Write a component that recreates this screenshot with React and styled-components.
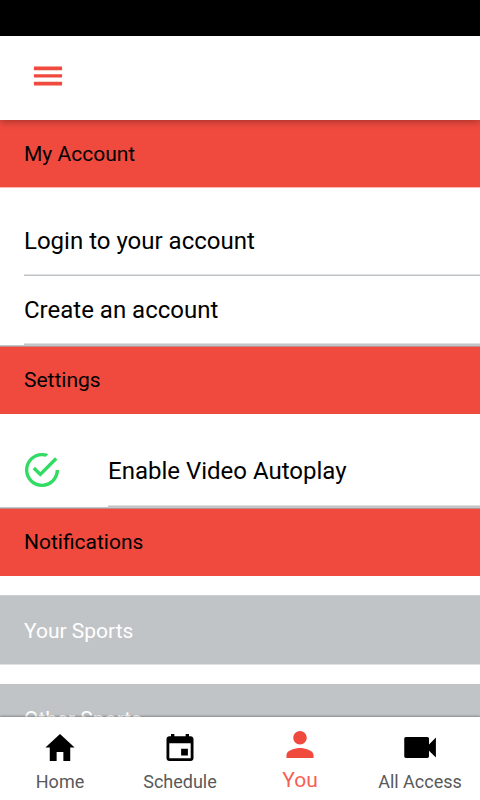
import styled, { createGlobalStyle } from "styled-components";

const GlobalStyle = createGlobalStyle`
  * {
    box-sizing: border-box;
  }
  body {
    margin: 0;
    background: #fff;
    font-family: Roboto, sans-serif;
    color: #000;
  }
`;

const Screen = styled.div`
  display: flex;
  flex-direction: column;
  height: 800px;
  width: 480px;
  overflow: hidden;
`;

const StatusBar = styled.div`
  flex: none;
  height: 36px;
  background: #000;
`;

const Toolbar = styled.header`
  flex: none;
  display: flex;
  align-items: center;
  height: 84px;
  padding: 0 0 4px 30px;
  background: #fff;
  z-index: 1;
  box-shadow: 0 2px 7px rgba(0, 0, 0, 0.3);
`;

const MenuButton = styled.button`
  display: flex;
  padding: 0;
  border: none;
  background: none;
  color: #f04a3f;
`;

const Content = styled.main`
  flex: 1;
  min-height: 0;
  overflow: hidden;
`;

const SectionHeader = styled.h2`
  margin: 0;
  height: 68px;
  padding: 0 24px;
  line-height: ${(props) => (props.$soft ? 69 : 67)}px;
  font-size: 21px;
  font-weight: 400;
  color: #000;
  background: #f04a3f;
  border-top: ${(props) => (props.$ruled ? "1px solid #c08c8a" : "none")};
  border-bottom: ${(props) => (props.$soft ? "1px solid #f9b5b0" : "none")};
`;

const Items = styled.ul`
  margin: 0;
  padding: 19px 0 0;
  list-style: none;
  border-bottom: 1px solid #c5c8ca;
`;

const Item = styled.li`
  display: flex;
  align-items: center;
  height: ${(props) => props.$height}px;
  padding-left: 24px;
`;

const ItemLabel = styled.div`
  flex: 1;
  height: 100%;
  line-height: ${(props) => props.$line}px;
  font-size: 24px;
  border-bottom: 1px solid #c1c4c7;
  box-shadow: inset 0 -1px #dfe0e1;
`;

const IconSlot = styled.div`
  display: flex;
  width: 84px;
  margin-left: -3px;
  margin-right: 3px;
  padding-bottom: 1px;
  color: #32db64;
`;

const SportGroup = styled.div`
  height: 70px;
  margin-top: 19px;
  padding-left: 24px;
  line-height: ${(props) => (props.$ruled ? 70 : 69)}px;
  font-size: 21px;
  color: #fff;
  background: #c1c4c7;
  border-top: 1px solid ${(props) => (props.$ruled ? "#cccfd1" : "#c1c4c7")};
  border-bottom: 1px solid #e0e1e3;
`;

const Tabs = styled.nav`
  flex: none;
  display: flex;
  height: 83px;
  background: #fff;
  z-index: 1;
  box-shadow: 0 -1px 2px rgba(0, 0, 0, 0.3);
`;

const Tab = styled.a`
  flex: 1;
  display: flex;
  flex-direction: column;
  align-items: center;
  padding-top: ${(props) => (props.$active ? 9 : 12)}px;
  color: ${(props) => (props.$active ? "#f04a3f" : "#000")};
`;

const TabLabel = styled.span`
  margin-top: ${(props) => (props.$active ? 6 : 5)}px;
  font-size: ${(props) => (props.$active ? 21 : 18)}px;
  line-height: 24px;
  white-space: nowrap;
  color: ${(props) => (props.$active ? "#f75f55" : "#595959")};
`;

const icons = {
  menu: "M56 391h400v-54H56V391zM56 277h400v-46H56v46zM56 121v54h400v-54H56z",
  home: "M208 448V320h96v128h97.6V256H464L256 64 48 256h62.4v192z",
  calendar:
    "M368.005 272h-96v96h96v-96zm-32-208v32h-160V64h-48v32h-24.01c-22.002 0-40 17.998-40 40v272c0 22.002 17.998 40 40 40h304.01c22.002 0 40-17.998 40-40V136c0-22.002-17.998-40-40-40h-24V64h-48zm72 344h-304.01V196h304.01v212z",
  person:
    "M256 256c52.805 0 96-43.201 96-96s-43.195-96-96-96-96 43.201-96 96 43.195 96 96 96zm0 48c-63.598 0-192 32.402-192 96v48h384v-48c0-63.598-128.402-96-192-96z",
  videocam:
    "M384 212v-81c0-13-10-24-24-24H56c-14 0-24 11-24 24v250c0 13 10 24 24 24h304c14 0 24-11 24-24v-81l98 98V114z",
  check:
    "M170.718 216.482L141.6 245.6l93.6 93.6 208-208-29.118-29.118L235.2 279.918l-64.482-63.436zM422.4 256c0 91.518-74.883 166.4-166.4 166.4S89.6 347.518 89.6 256 164.482 89.6 256 89.6c15.6 0 31.2 2.082 45.764 6.241L334 62.4C310.083 53.039 283.042 48 256 48 141.6 48 48 141.6 48 256s93.6 208 208 208 208-93.6 208-208h-41.6z",
};

const Icon = ({ name, size = 36, top = 0 }) => (
  <svg width={size} height={size} viewBox={`0 ${top} 512 512`} fill="currentColor">
    <path d={icons[name]} />
  </svg>
);

const tabs = [
  { icon: "home", label: "Home" },
  { icon: "calendar", label: "Schedule" },
  { icon: "person", label: "You", active: true },
  { icon: "videocam", label: "All Access" },
];

const App = () => (
  <>
    <GlobalStyle />
    <Screen>
      <StatusBar />
      <Toolbar>
        <MenuButton aria-label="Menu">
          <Icon name="menu" />
        </MenuButton>
      </Toolbar>
      <Content>
        <SectionHeader $soft>My Account</SectionHeader>
        <Items>
          <Item $height={69}>
            <ItemLabel $line={68}>Login to your account</ItemLabel>
          </Item>
          <Item $height={69}>
            <ItemLabel $line={68}>Create an account</ItemLabel>
          </Item>
        </Items>
        <SectionHeader $ruled>Settings</SectionHeader>
        <Items>
          <Item $height={74}>
            <IconSlot>
              <Icon name="check" size={42} />
            </IconSlot>
            <ItemLabel $line={76}>Enable Video Autoplay</ItemLabel>
          </Item>
        </Items>
        <SectionHeader $ruled>Notifications</SectionHeader>
        <SportGroup $ruled>Your Sports</SportGroup>
        <SportGroup>Other Sports</SportGroup>
      </Content>
      <Tabs>
        {tabs.map(({ icon, label, active }) => (
          <Tab key={label} $active={active}>
            <Icon name={icon} top={-8} />
            <TabLabel $active={active}>{label}</TabLabel>
          </Tab>
        ))}
      </Tabs>
    </Screen>
  </>
);

export default App;
